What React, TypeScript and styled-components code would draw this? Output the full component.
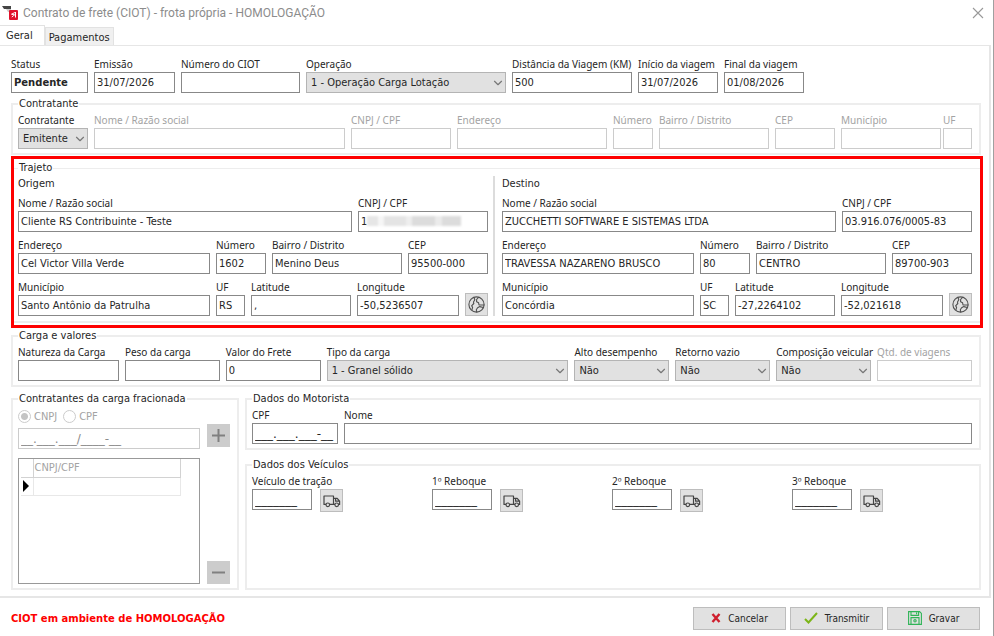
import React, { useId } from "react";
import styled, { createGlobalStyle, css } from "styled-components";
import { ChevronDown } from "lucide-react";

const GlobalStyle = createGlobalStyle`
  *, *::before, *::after { box-sizing: border-box; }
  body { margin: 0; background: #fff; }
  body, button, input, select {
    font-family: "DejaVu Sans Condensed", "Noto Sans", sans-serif;
    font-size: 11px;
    color: #262626;
  }
`;

const Window = styled.div`
  min-height: 100vh;
  display: flex;
  flex-direction: column;
  background: #fff;
  border-right: 1px solid #a0a0a0;
`;

const TitleBar = styled.header`
  display: flex;
  align-items: center;
  gap: 5px;
  height: 25px;
  padding: 0 9px 0 2px;
`;

const Title = styled.h1`
  flex: 1;
  margin: 0;
  font: 400 12px/20px Roboto, sans-serif;
  color: #8c8c8c;
`;

const CloseButton = styled.button`
  display: flex;
  padding: 0;
  border: 0;
  background: none;
  color: #999;
`;

const TabBar = styled.div`
  display: flex;
  align-items: flex-end;
  height: 20px;
`;

const Tab = styled.button<{ $active?: boolean }>`
  height: ${(p) => (p.$active ? 20 : 18)}px;
  padding: ${(p) => (p.$active ? "0 11px 0 6px" : "2px 3px 0")};
  border: 1px solid #e2e2e2;
  border-bottom: 0;
  border-left-width: ${(p) => (p.$active ? 0 : 1)}px;
  background: ${(p) => (p.$active ? "#fff" : "#f0f0f0")};
  line-height: 16px;
`;

const Panel = styled.main`
  flex: 1;
  display: flex;
  flex-direction: column;
  margin-right: 2px;
  padding: 10px 8px 6px 11px;
  border: solid #e6e6e6;
  border-width: 1px 2px 2px 0;
`;

const fieldset = css`
  min-width: 0;
  margin: 0;
  border: 2px solid #ededed;
`;

const Group = styled.fieldset<{ $top: number }>`
  ${fieldset}
  margin-top: ${(p) => p.$top}px;
  padding: 2px 7px 4px 5px;
`;

const Legend = styled.legend`
  padding: 0 1px;
  line-height: 12px;
`;

const Highlight = styled.div`
  margin: 1px -2px 0 0;
  padding: 3px 0 2px;
  border: 3px solid #fe0000;
`;

const RouteGroup = styled.fieldset`
  ${fieldset}
  border-width: 1px 0 2px;
  padding: 2px 8px 5px 4px;
`;

const RouteColumns = styled.div`
  display: grid;
  grid-template-columns: minmax(0, 475fr) minmax(0, 479fr);
`;

const Place = styled.section`
  display: flex;
  flex-direction: column;
  gap: 5px;
  & + & {
    padding-left: 7px;
    border-left: 2px solid #dcdcdc;
  }
  &:first-child {
    padding-right: 5px;
  }
`;

const PlaceTitle = styled.h2`
  margin: 0 0 -2px;
  font-size: inherit;
  font-weight: 400;
  line-height: 16px;
`;

const Row = styled.div<{ $cols: string; $gap?: number }>`
  display: grid;
  grid-template-columns: ${(p) =>
    p.$cols
      .split(" ")
      .map((c) => (c.endsWith("px") ? c : `minmax(0, ${c}fr)`))
      .join(" ")};
  gap: ${(p) => p.$gap ?? 6}px;
  align-items: end;
`;

const FieldBox = styled.div`
  display: flex;
  flex-direction: column;
  min-width: 0;
`;

const Label = styled.label<{ $off?: boolean }>`
  font-family: "Noto Sans", sans-serif;
  font-size: 10px;
  line-height: 16px;
  white-space: nowrap;
  color: ${(p) => (p.$off ? "#a3a3a3" : "inherit")};
`;

const Input = styled.input<{ $bold?: boolean }>`
  width: 100%;
  height: 21px;
  padding: 0 2px;
  border: 1px solid #888;
  border-radius: 0;
  background: #fff;
  &:disabled {
    border-color: #ccc;
    color: #8c8c8c;
  }
  ${(p) =>
    p.$bold &&
    css`
      font-family: "DejaVu Sans", sans-serif;
      font-size: 10px;
      font-weight: 700;
    `}
`;

const MaskInput = styled(Input)`
  font-family: "DejaVu Sans", sans-serif;
  font-size: 12px;
  line-height: 19px;
`;

const SelectBox = styled.div`
  position: relative;
  svg {
    position: absolute;
    right: 1px;
    top: 4px;
    color: #777;
    pointer-events: none;
  }
`;

const Select = styled.select`
  display: block;
  appearance: none;
  width: 100%;
  height: 21px;
  padding: 0 16px 0 4px;
  border: 1px solid #b4b4b4;
  border-radius: 0;
  background: #e1e1e1;
`;

const Masked = styled.div`
  position: relative;
`;

const Smudge = styled.span`
  position: absolute;
  left: 9px;
  top: 5px;
  width: 94px;
  height: 10px;
  filter: blur(1px);
  background: linear-gradient(90deg, #e6e6e6 12%, #f6f6f6 12% 18%, #e4e4e4 18% 42%, #eeeeee 42% 48%, #dcdcdc 48% 72%, #ebebeb 72% 80%, #dcdcdc 80%);
`;

const IconButton = styled.button<{ $dark?: boolean }>`
  display: flex;
  align-items: center;
  justify-content: center;
  width: 23px;
  height: 23px;
  padding: 0;
  border: 1px solid ${(p) => (p.$dark ? "#ccc" : "#bdbdbd")};
  background: ${(p) => (p.$dark ? "#ccc" : "#e1e1e1")};
  color: #555;
`;

const Lower = styled.div`
  flex: 1;
  display: grid;
  grid-template-columns: minmax(0, 228fr) minmax(0, 736fr);
  gap: 6px;
  margin-top: 6px;
`;

const LowerRight = styled.div`
  display: flex;
  flex-direction: column;
  & > fieldset:last-child {
    flex: 1;
  }
`;

const SplitBody = styled.div`
  display: grid;
  grid-template-columns: minmax(0, 1fr) 23px;
  grid-template-rows: auto auto minmax(125px, 1fr);
  column-gap: 7px;
  height: 100%;
`;

const Radios = styled.div`
  grid-column: 1 / -1;
  display: flex;
  gap: 6px;
  height: 17px;
  padding-top: 2px;
`;

const RadioLabel = styled.label`
  display: flex;
  align-items: center;
  gap: 3px;
  line-height: 16px;
  color: #a3a3a3;
`;

const Radio = styled.input`
  appearance: none;
  width: 13px;
  height: 13px;
  margin: 0;
  border: 1px solid #ccc;
  border-radius: 50%;
  background: #fff;
  &:checked {
    background: radial-gradient(circle, #c4c4c4 0 3px, #fff 4px);
  }
`;

const InputCell = styled.div`
  padding: 4px 0 9px;
`;

const GridFrame = styled.div`
  padding: 0 18px 0 2px;
  border: 1px solid #999;
`;

const DataGrid = styled.table`
  width: 100%;
  border-collapse: collapse;
  table-layout: fixed;
  th, td {
    height: 18px;
    padding: 0 1px;
    border: 1px solid #e8e8e8;
    border-width: 0 1px 1px 0;
    text-align: left;
    font-weight: 400;
    line-height: 16px;
    color: #a3a3a3;
  }
  th {
    border-color: #d2d2d2;
  }
  th:first-child, td:first-child {
    width: 12px;
    padding: 0 0 0 2px;
  }
  svg {
    display: block;
  }
`;

const BottomCell = styled.div`
  display: flex;
  align-items: flex-end;
`;

const Vehicles = styled.div`
  display: grid;
  grid-template-columns: repeat(4, minmax(0, 1fr));
`;

const VehicleControls = styled.div`
  display: grid;
  grid-template-columns: 60px 23px;
  gap: 8px;
`;

const Footer = styled.footer`
  display: flex;
  align-items: center;
  gap: 4px;
  height: 38px;
  padding: 2px 13px 0 11px;
`;

const Notice = styled.strong`
  flex: 1;
  font-family: "DejaVu Sans", sans-serif;
  font-size: 10px;
  color: #fe0000;
`;

const ActionButton = styled.button`
  display: flex;
  align-items: center;
  justify-content: center;
  gap: 7px;
  width: 93px;
  height: 23px;
  padding: 0;
  border: 1px solid #bdbdbd;
  background: #e1e1e1;
  font-size: 10px;
`;

type FieldProps = {
  label: string;
  value?: string;
  disabled?: boolean;
  bold?: boolean;
  mask?: boolean;
};

function Field({ label, value = "", disabled, bold, mask }: FieldProps) {
  const id = useId();
  const Control = mask ? MaskInput : Input;
  return (
    <FieldBox>
      <Label htmlFor={id} $off={disabled}>{label}</Label>
      <Control id={id} defaultValue={value} disabled={disabled} $bold={bold} />
    </FieldBox>
  );
}

function SelectField({ label, value }: { label: string; value: string }) {
  const id = useId();
  return (
    <FieldBox>
      <Label htmlFor={id}>{label}</Label>
      <SelectBox>
        <Select id={id} defaultValue={value}>
          <option>{value}</option>
        </Select>
        <ChevronDown size={14} strokeWidth={2} />
      </SelectBox>
    </FieldBox>
  );
}

function MaskedField({ label }: { label: string }) {
  const id = useId();
  return (
    <FieldBox>
      <Label htmlFor={id}>{label}</Label>
      <Masked>
        <Input id={id} defaultValue="1" />
        <Smudge />
      </Masked>
    </FieldBox>
  );
}

const GlobeIcon = () => (
  <svg width="17" height="17" viewBox="0 0 17 17" fill="none" stroke="#505050" strokeWidth="1.1" strokeLinecap="round" strokeLinejoin="round">
    <circle cx="8.5" cy="8.5" r="7.6" />
    <path d="M6 1.5l.8 2.2-1.3 2.4.3 1.4-2.2 2.3 1 1.6-.6 2.2" />
    <path d="M10.5 1.4L8.6 3.5v2.2l2 1.1.4 2.2h5M15.3 11.5l-3.5-.9-2.2 1.1-1.3 2 .4 2.3" />
  </svg>
);

const TruckIcon = () => (
  <svg width="18" height="14" viewBox="0 0 18 14" fill="none" stroke="#444" strokeWidth="1.2" strokeLinejoin="round">
    <path d="M3 10.4H1V2h9.5v8.4H6.5M10.5 4.4h3.7l2.4 2.8v3.2h-1.2M12 10.4h-1.5M12.6 4.4v2.8h3.8" />
    <circle cx="4.8" cy="10.8" r="1.8" />
    <circle cx="13.7" cy="10.8" r="1.8" />
  </svg>
);

const AppIcon = () => (
  <svg width="16" height="15" viewBox="0 0 16 15">
    <path d="M0 1h9v3H2z" fill="#444" />
    <path d="M4 4h5v3H6z" fill="#ccc" />
    <rect x="7" y="5" width="9" height="10" rx="1" fill="#e0122b" />
    <path d="M13.5 7v5.5M13 7.5 9.5 9.2l3.5.8M9.8 12l2-1.6" stroke="#fff" strokeWidth="1" fill="none" />
  </svg>
);

type PlaceData = {
  title: string;
  name: string;
  doc?: string;
  street: string;
  number: string;
  district: string;
  zip: string;
  city: string;
  state: string;
  lat: string;
  lng: string;
};

function PlaceForm({ data }: { data: PlaceData }) {
  return (
    <Place>
      <PlaceTitle>{data.title}</PlaceTitle>
      <Row $cols="334 130">
        <Field label="Nome / Razão social" value={data.name} />
        {data.doc ? <Field label="CNPJ / CPF" value={data.doc} /> : <MaskedField label="CNPJ / CPF" />}
      </Row>
      <Row $cols="192 50 130 80">
        <Field label="Endereço" value={data.street} />
        <Field label="Número" value={data.number} />
        <Field label="Bairro / Distrito" value={data.district} />
        <Field label="CEP" value={data.zip} />
      </Row>
      <Row $cols="192 29 100 102 23px">
        <Field label="Município" value={data.city} />
        <Field label="UF" value={data.state} />
        <Field label="Latitude" value={data.lat} />
        <Field label="Longitude" value={data.lng} />
        <IconButton type="button" aria-label="Mapa"><GlobeIcon /></IconButton>
      </Row>
    </Place>
  );
}

function Vehicle({ label }: { label: string }) {
  const id = useId();
  return (
    <FieldBox>
      <Label htmlFor={id}>{label}</Label>
      <VehicleControls>
        <MaskInput id={id} defaultValue="_______" />
        <IconButton type="button" aria-label={`Buscar ${label}`}><TruckIcon /></IconButton>
      </VehicleControls>
    </FieldBox>
  );
}

const origin: PlaceData = {
  title: "Origem",
  name: "Cliente RS Contribuinte - Teste",
  street: "Cel Victor Villa Verde",
  number: "1602",
  district: "Menino Deus",
  zip: "95500-000",
  city: "Santo Antônio da Patrulha",
  state: "RS",
  lat: ",",
  lng: "-50,5236507",
};

const destination: PlaceData = {
  title: "Destino",
  name: "ZUCCHETTI SOFTWARE E SISTEMAS LTDA",
  doc: "03.916.076/0005-83",
  street: "TRAVESSA NAZARENO BRUSCO",
  number: "80",
  district: "CENTRO",
  zip: "89700-903",
  city: "Concórdia",
  state: "SC",
  lat: "-27,2264102",
  lng: "-52,021618",
};

export default function App() {
  return (
    <>
      <GlobalStyle />
      <Window>
        <TitleBar>
          <AppIcon />
          <Title>Contrato de frete (CIOT) - frota própria - HOMOLOGAÇÃO</Title>
          <CloseButton type="button" aria-label="Fechar">
            <svg width="12" height="12" viewBox="0 0 12 12" stroke="currentColor" strokeWidth="1.1">
              <path d="M1 1l10 10M11 1L1 11" />
            </svg>
          </CloseButton>
        </TitleBar>
        <TabBar role="tablist">
          <Tab role="tab" aria-selected="true" $active>Geral</Tab>
          <Tab role="tab" aria-selected="false">Pagamentos</Tab>
        </TabBar>
        <Panel>
          <Row $cols="77 81 119 200 120 80 80 171">
            <Field label="Status" value="Pendente" bold />
            <Field label="Emissão" value="31/07/2026" />
            <Field label="Número do CIOT" />
            <SelectField label="Operação" value="1 - Operação Carga Lotação" />
            <Field label="Distância da Viagem (KM)" value="500" />
            <Field label="Início da viagem" value="31/07/2026" />
            <Field label="Final da viagem" value="01/08/2026" />
          </Row>

          <Group $top={5}>
            <Legend>Contratante</Legend>
            <Row $cols="70 251 100 150 40 110 60 131">
              <SelectField label="Contratante" value="Emitente" />
              <Field label="Nome / Razão social" disabled />
              <Field label="CNPJ / CPF" disabled />
              <Field label="Endereço" disabled />
              <Field label="Número" disabled />
              <Field label="Bairro / Distrito" disabled />
              <Field label="CEP" disabled />
              <Row $cols="100 29" $gap={2}>
                <Field label="Município" disabled />
                <Field label="UF" disabled />
              </Row>
            </Row>
          </Group>

          <Highlight>
            <RouteGroup>
              <Legend>Trajeto</Legend>
              <RouteColumns>
                <PlaceForm data={origin} />
                <PlaceForm data={destination} />
              </RouteColumns>
            </RouteGroup>
          </Highlight>

          <Group $top={2}>
            <Legend>Carga e valores</Legend>
            <Row $cols="101 95 95 242 95 95 95 95">
              <Field label="Natureza da Carga" />
              <Field label="Peso da carga" />
              <Field label="Valor do Frete" value="0" />
              <SelectField label="Tipo da carga" value="1 - Granel sólido" />
              <SelectField label="Alto desempenho" value="Não" />
              <SelectField label="Retorno vazio" value="Não" />
              <SelectField label="Composição veicular" value="Não" />
              <Field label="Qtd. de  viagens" disabled />
            </Row>
          </Group>

          <Lower>
            <Group $top={0}>
              <Legend>Contratantes da carga fracionada</Legend>
              <SplitBody>
                <Radios>
                  <RadioLabel><Radio type="radio" name="doc" defaultChecked disabled />CNPJ</RadioLabel>
                  <RadioLabel><Radio type="radio" name="doc" disabled />CPF</RadioLabel>
                </Radios>
                <InputCell>
                  <MaskInput aria-label="CNPJ" defaultValue="__.___.___/____-__" disabled />
                </InputCell>
                <IconButton type="button" aria-label="Adicionar" $dark disabled>
                  <svg width="13" height="13" viewBox="0 0 13 13" stroke="#808080" strokeWidth="2">
                    <path d="M6.5 0v13M0 6.5h13" />
                  </svg>
                </IconButton>
                <GridFrame>
                  <DataGrid>
                    <thead>
                      <tr><th aria-label="Seleção" /><th scope="col">CNPJ/CPF</th></tr>
                    </thead>
                    <tbody>
                      <tr>
                        <td>
                          <svg width="6" height="12" viewBox="0 0 6 12"><path d="M0 0l6 6-6 6z" fill="#000" /></svg>
                        </td>
                        <td />
                      </tr>
                    </tbody>
                  </DataGrid>
                </GridFrame>
                <BottomCell>
                  <IconButton type="button" aria-label="Remover" $dark disabled>
                    <svg width="13" height="3" viewBox="0 0 13 3" stroke="#808080" strokeWidth="2">
                      <path d="M0 1.5h13" />
                    </svg>
                  </IconButton>
                </BottomCell>
              </SplitBody>
            </Group>

            <LowerRight>
              <Group $top={0}>
                <Legend>Dados do Motorista</Legend>
                <Row $cols="86 628">
                  <Field label="CPF" value="___.___.___-__" mask />
                  <Field label="Nome" />
                </Row>
              </Group>
              <Group $top={9}>
                <Legend>Dados dos Veículos</Legend>
                <Vehicles>
                  <Vehicle label="Veículo de tração" />
                  <Vehicle label="1º Reboque" />
                  <Vehicle label="2º Reboque" />
                  <Vehicle label="3º Reboque" />
                </Vehicles>
              </Group>
            </LowerRight>
          </Lower>
        </Panel>
        <Footer>
          <Notice>CIOT em ambiente de HOMOLOGAÇÃO</Notice>
          <ActionButton type="button">
            <svg width="10" height="10" viewBox="0 0 10 10" stroke="#cf1f2e" strokeWidth="2.4">
              <path d="M1.5 1l7 8M8.5 1l-7 8" />
            </svg>
            Cancelar
          </ActionButton>
          <ActionButton type="button">
            <svg width="14" height="12" viewBox="0 0 14 12" stroke="#7cb518" strokeWidth="2" fill="none">
              <path d="M1 7l3.5 3.5L13 1" />
            </svg>
            Transmitir
          </ActionButton>
          <ActionButton type="button">
            <svg width="14" height="14" viewBox="0 0 14 14" stroke="#2fb457" strokeWidth="1.1" fill="none">
              <path d="M.6.6h11l1.8 1.8v11H.6zM3 .6v3.8h7.6V.6M8.6 1.5v1.8M3 13.4V6.6h8v6.8" />
              <circle cx="7" cy="9.8" r="1.2" />
            </svg>
            Gravar
          </ActionButton>
        </Footer>
      </Window>
    </>
  );
}
